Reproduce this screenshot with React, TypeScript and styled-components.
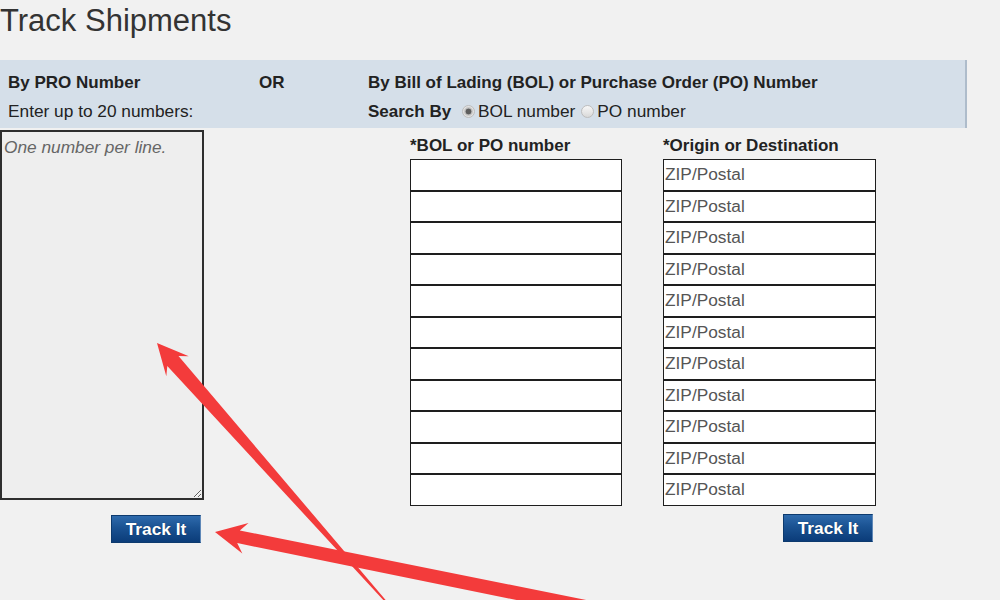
import React from "react";
import styled, { createGlobalStyle } from "styled-components";

const GlobalStyle = createGlobalStyle`
  html, body {
    margin: 0;
    padding: 0;
    background: #f1f1f1;
  }
  body {
    font-family: "Liberation Sans", Arial, Helvetica, sans-serif;
    color: #222;
  }
`;

const Page = styled.div`
  position: relative;
  width: 1000px;
  height: 600px;
  overflow: hidden;
  padding-top: 3px;
  box-sizing: border-box;
  font-size: 17.3px;
`;

const Title = styled.h1`
  margin: 0;
  font-size: 31px;
  font-weight: 400;
  line-height: 35px;
  color: #333;
`;

const Band = styled.div`
  margin-top: 22px;
  width: 957px;
  box-sizing: content-box;
  background: #d5dfe9;
  border-right: 2px solid #aebccb;
  padding: 8px 0 2px 8px;
  display: grid;
  grid-template-columns: 251px 109px 1fr;
  grid-auto-rows: 29px;
  line-height: 29px;
  color: #222;
`;

const Cell = styled.div<{ $bold?: boolean }>`
  font-weight: ${(p) => (p.$bold ? 700 : 400)};
  font-size: ${(p) => (p.$bold ? "17px" : "17.3px")};
  white-space: nowrap;
`;

const Strong = styled.span`
  font-weight: 700;
  font-size: 17px;
`;

const Radio = styled.input.attrs({ type: "radio" })`
  appearance: none;
  -webkit-appearance: none;
  width: 13px;
  height: 13px;
  margin: 0 3px 0 6px;
  padding: 0;
  border-radius: 50%;
  border: 1px solid #bdbdbd;
  box-sizing: border-box;
  vertical-align: -1px;
  background: linear-gradient(#f7f7f7, #d9d9d9);
  &:checked {
    background: radial-gradient(circle, #5e5e5e 0 2.6px, #b5b5b5 3.2px, #e2e2e2 5px);
  }
`;

const Content = styled.div`
  display: flex;
  align-items: flex-start;
  margin-top: 2px;
`;

const Column = styled.div<{ $width: number; $offset: number }>`
  display: flex;
  flex-direction: column;
  width: ${(p) => p.$width}px;
  margin-left: ${(p) => p.$offset}px;
`;

const ProText = styled.textarea`
  display: block;
  width: 204px;
  height: 370px;
  box-sizing: border-box;
  margin: 0;
  border: 2px solid #2e2e2e;
  background: #eeeeee;
  padding: 6px 2px;
  font-family: "Liberation Sans", Arial, sans-serif;
  font-size: 17.3px;
  line-height: 19.3px;
  color: #222;
  &::placeholder {
    font-style: italic;
    color: #666;
  }
`;

const ColLabel = styled.div`
  font-weight: 700;
  font-size: 17px;
  padding-top: 3px;
  line-height: 26px;
  color: #222;
  white-space: nowrap;
`;

const FieldInput = styled.input`
  display: block;
  width: 100%;
  height: 31.5px;
  box-sizing: border-box;
  margin: 0;
  border: 1px solid #1e1e1e;
  background: #fff;
  padding: 0 1px;
  font-family: "Liberation Sans", Arial, sans-serif;
  font-size: 17.3px;
  color: #222;
  &::placeholder {
    color: #555;
  }
`;

const TrackButton = styled.button<{ $top: number }>`
  align-self: flex-end;
  margin: ${(p) => p.$top}px 3px 0 0;
  width: 90px;
  height: 28px;
  padding: 0;
  border: 1px solid #0d3a6e;
  border-right-color: #5f88b8;
  background: linear-gradient(#2e6aac 0%, #1a5292 45%, #0b3c79 100%);
  color: #fff;
  font-family: "Liberation Sans", Arial, sans-serif;
  font-weight: 700;
  font-size: 17.3px;
  line-height: 26px;
  text-shadow: 0 0 1px rgba(0, 0, 0, 0.4);
  cursor: pointer;
`;

const Overlay = styled.svg`
  position: absolute;
  left: 0;
  top: 0;
  width: 1000px;
  height: 600px;
  pointer-events: none;
`;

type Pt = [number, number];

function arrowPoints(
  T: Pt,
  P: Pt,
  headLen: number,
  headHalf: number,
  notch: number,
  w1: number,
  w2: number
): string {
  const dx = P[0] - T[0];
  const dy = P[1] - T[1];
  const len = Math.hypot(dx, dy);
  const ux = dx / len;
  const uy = dy / len;
  const nx = -uy;
  const ny = ux;
  const at = (d: number, s: number): Pt => [T[0] + ux * d + nx * s, T[1] + uy * d + ny * s];
  const pts: Pt[] = [
    T,
    at(headLen, headHalf),
    at(notch, w1),
    [P[0] + nx * w2, P[1] + ny * w2],
    [P[0] - nx * w2, P[1] - ny * w2],
    at(notch, -w1),
    at(headLen, -headHalf),
  ];
  return pts.map((p) => `${p[0].toFixed(1)},${p[1].toFixed(1)}`).join(" ");
}

const ROWS = Array.from({ length: 11 }, (_, i) => i);

export default function App() {
  return (
    <>
      <GlobalStyle />
      <Page>
        <Title>Track Shipments</Title>
        <Band>
          <Cell $bold>By PRO Number</Cell>
          <Cell $bold>OR</Cell>
          <Cell $bold>By Bill of Lading (BOL) or Purchase Order (PO) Number</Cell>
          <Cell>Enter up to 20 numbers:</Cell>
          <Cell />
          <Cell>
            <Strong>Search By</Strong> <Radio name="searchBy" defaultChecked />BOL number<Radio name="searchBy" />PO number
          </Cell>
        </Band>
        <Content>
          <Column $width={204} $offset={0}>
            <ProText placeholder="One number per line." />
            <TrackButton $top={15}>Track It</TrackButton>
          </Column>
          <Column $width={212} $offset={206}>
            <ColLabel>*BOL or PO number</ColLabel>
            {ROWS.map((i) => (
              <FieldInput key={i} />
            ))}
          </Column>
          <Column $width={213} $offset={41}>
            <ColLabel>*Origin or Destination</ColLabel>
            {ROWS.map((i) => (
              <FieldInput key={i} placeholder="ZIP/Postal" />
            ))}
            <TrackButton $top={8}>Track It</TrackButton>
          </Column>
        </Content>
        <Overlay viewBox="0 0 1000 600">
          <polygon points={arrowPoints([157, 343], [388, 604], 31, 15, 24, 7.5, 0.8)} fill="#f33b3b" />
          <polygon points={arrowPoints([215, 532], [650, 620], 31, 15.6, 24, 6.5, 7)} fill="#f33b3b" />
        </Overlay>
      </Page>
    </>
  );
}
